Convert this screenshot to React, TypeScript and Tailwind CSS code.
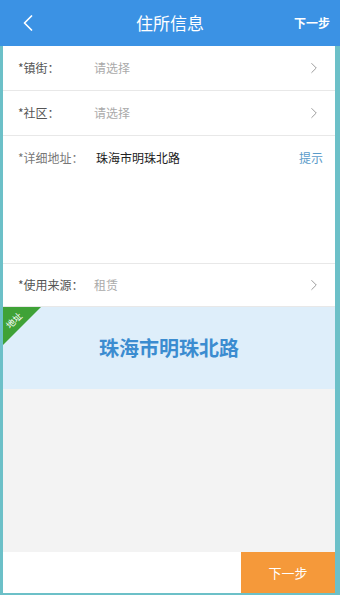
import { ChevronLeft, ChevronRight } from "lucide-react"

const font = { fontFamily: '"Noto Sans CJK SC", "Noto Sans", sans-serif' }

function SelectRow({ label, value, h = "h-[45px]" }: { label: string; value: string; h?: string }) {
  return (
    <div className={`flex items-center ${h} border-b border-[#e8e8e8] pl-[15px] pr-[12px]`}>
      <span className="w-[76px] text-[12px] text-[#555]">{label}</span>
      <span className="flex-1 text-[12px] text-[#aaa]">{value}</span>
      <ChevronRight className="h-[18px] w-[18px] text-[#999]" strokeWidth={1.3} />
    </div>
  )
}

export default function App() {
  return (
    <div className="flex h-[595px] w-[340px] flex-col bg-[#6cc0c8]" style={font}>
      <header className="relative flex h-[46px] shrink-0 items-center justify-center bg-[#3b92e4] text-white">
        <ChevronLeft className="absolute left-[14px] top-[9px] h-[28px] w-[28px]" strokeWidth={1.5} />
        <h1 className="text-[17px]">住所信息</h1>
        <span className="absolute right-[10px] top-[14px] text-[12px] font-bold">下一步</span>
      </header>

      <div className="ml-[3px] mr-[5px] mb-[2px] flex flex-1 flex-col overflow-hidden bg-[#f3f3f3]">
        <div className="bg-white">
          <SelectRow label="*镇街：" value="请选择" />
          <SelectRow label="*社区：" value="请选择" />
          <div className="flex h-[128px] items-start border-b border-[#e8e8e8] pl-[15px] pr-[12px] pt-[13px]">
            <span className="w-[78px] text-[12px] text-[#777]">*详细地址：</span>
            <span className="flex-1 text-[12px] text-[#222]">珠海市明珠北路</span>
            <span className="text-[12px] text-[#5a9bc9]">提示</span>
          </div>
          <SelectRow label="*使用来源：" value="租赁" h="h-[43px]" />
        </div>

        <div className="relative flex h-[82px] items-center justify-center bg-[#deeefa]">
          <div className="absolute left-0 top-0 h-[38px] w-[38px]">
            <div className="h-full w-full bg-[#3fa237] [clip-path:polygon(0_0,100%_0,0_100%)]" />
            <span className="absolute left-[2px] top-[9px] -rotate-45 text-[9px] leading-none text-white">地址</span>
          </div>
          <span className="text-[20px] font-bold text-[#3b8cd0]">珠海市明珠北路</span>
        </div>

        <div className="flex-1" />

        <div className="flex h-[41px] shrink-0 justify-end bg-white">
          <button className="w-[94px] bg-[#f5993a] text-[13px] text-white">下一步</button>
        </div>
      </div>
    </div>
  )
}
